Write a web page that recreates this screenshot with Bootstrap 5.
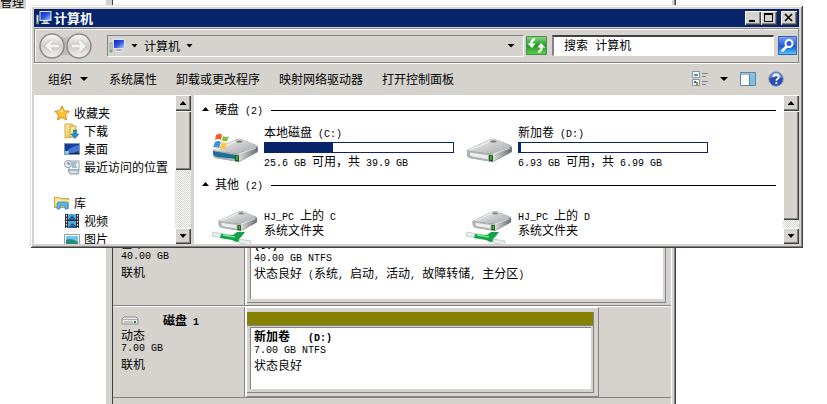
<!DOCTYPE html>
<html lang="zh-CN">
<head>
<meta charset="utf-8">
<meta name="viewport" content="width=device-width, initial-scale=1">
<title>计算机</title>
<link href="https://cdn.jsdelivr.net/npm/bootstrap@5.3.0/dist/css/bootstrap.min.css" rel="stylesheet">
<script src="https://cdn.jsdelivr.net/npm/bootstrap@5.3.0/dist/js/bootstrap.bundle.min.js"></script>
<style>
:root{--face:#d6d3ce;--shade:#848284;--dark:#424142;--navy:#08246b}
body{font:12px/14px "Noto Sans CJK SC",sans-serif;color:#000;background:#fff}
button,input{font:inherit;color:inherit;border-radius:0}
button{padding:0;border:0;background:none}
.la{font-family:"Liberation Mono",monospace;font-size:10px;white-space:pre}
span.la{line-height:10px}
.desktop{min-height:100vh}
.tree-pick{left:0;top:-5px;background:var(--face);padding-right:2px}

/* disk management */
.disk-win{margin:0 151px 0 106px;min-height:100vh;background:var(--face);border-left:1px solid var(--face);border-right:1px solid var(--dark);padding:0 3px 0 5px;box-shadow:inset -1px 0 var(--shade)}
.disk-in{border-left:1px solid var(--dark);border-right:1px solid #fff}
.volumes{height:214px;background:#fff}
.disk-row{height:92px;border-bottom:1px solid var(--shade);border-top:1px solid #fff}
.disk-info{width:132px;padding:6px 8px;border-right:1px solid var(--shade)}
.state{margin-top:1px}
.disk-parts{border-left:1px solid #fff}
.vol{border:1px solid var(--shade);border-top-color:#fff;border-left-color:#fff;padding:4px 4px 3px 0}
.vol-7{width:83%}
.vol-in{border-right:1px solid var(--shade);border-bottom:1px solid var(--shade);padding-bottom:3px}
.vol-bar{height:14px;background:#848200;border-bottom:1px solid var(--shade)}
.vol-body{background:#fff;border:1px solid var(--shade);border-right:0;border-bottom:0;margin:1px 2px 0 3px;padding:1px 3px}
.full .vol{border-right-color:transparent;border-bottom:0;padding-bottom:2px}

/* explorer window */
.explorer{top:5px;left:30px;right:24px;background:var(--face);padding:4px;box-shadow:inset 1px 1px #e7e3de,inset -1px -1px var(--dark),inset 2px 2px #fff,inset -2px -2px var(--shade)}
.title{height:18px;background:var(--navy);color:#fff;padding:0 2px 0 1px}
.title b{font-size:13px;padding-left:2px}
.bevel{background:var(--face);box-shadow:inset 1px 1px #fff,inset -1px -1px var(--dark),inset -2px -2px var(--shade)}
.cap{width:16px;height:14px}
.nav-strip{height:35px;margin-top:1px;border:1px solid var(--shade);box-shadow:0 1px #fff,inset 1px 1px #fff;padding:0 1px 0 3px}
.address{height:22px;margin-left:14px;border:1px solid var(--shade);border-right-color:#fff;border-bottom-color:#fff;padding:0 8px 0 1px}
.address .gap-6{gap:6px}
.refresh{width:21px;height:19px;margin:0 5px 0 2px}
.search{width:222px;height:21px;border:2px solid var(--dark);border-right:1px solid #fff;border-bottom:1px solid #fff;border-left-color:var(--shade);padding:1px 10px 0;background:#fff;font-family:"Liberation Mono","Noto Sans CJK SC",monospace;outline:0}
.search::placeholder{color:#000;opacity:1}
.tools{height:32px;gap:19px;padding:0 15px 0 14px}
.drop{gap:8px;padding-right:2px}
.views{gap:12px}
.arrow{width:7px;height:4px;background:#000;clip-path:polygon(0 0,100% 0,50% 100%)}
.arrow.up{clip-path:polygon(50% 0,100% 100%,0 100%)}
.arrow.wide{width:8px;height:4px}
.panes{height:149px}
.tree{width:141px;background:#fff;padding:9px 0 0 20px;overflow:hidden}
.tree a{display:flex;align-items:center;height:18px;gap:4px;color:#000;text-decoration:none;white-space:nowrap;flex:none}
.tree .kid{padding-left:10px}
.tree .lib{margin-top:18px}
.scroll{width:16px;flex:none;background:repeating-conic-gradient(#fff 0 25%,var(--face) 0 50%) 0 0/2px 2px}
.scroll button{width:16px;height:16px;flex:none}
.thumb-l{height:59px}.thumb-r{height:109px}
.split{width:3px;background:var(--face)}
.files{background:#fff;overflow:hidden;padding:6px 7px 0 8px}
.group{height:16px;gap:6px}
.group hr{margin:2px 0 0 2px;opacity:1;border-top:1px solid #000}
.tiles{display:grid;grid-template-columns:repeat(auto-fill,254px);padding-left:9px}
.tile{display:flex;align-items:center;height:59px;gap:5px}
.tile svg{flex:none}
.tile.net{height:60px}
.net svg{margin-top:10px}
.tile .progress{width:190px;height:11px;margin:2px 0 1px;border:1px solid var(--navy);border-radius:0;background:#fff}
.progress-bar{background:var(--navy)}
svg{display:block}
</style>
</head>
<body>
<svg width="0" height="0" class="position-absolute" aria-hidden="true">
<defs>
<linearGradient id="top" x1="0" y1="0" x2="1" y2="1"><stop offset="0" stop-color="#f6f6f6"/><stop offset="1" stop-color="#a2a4a6"/></linearGradient>
<linearGradient id="side" x1="0" y1="0" x2="1" y2="0"><stop offset="0" stop-color="#dcdcdc"/><stop offset="1" stop-color="#6c6e70"/></linearGradient>
<linearGradient id="scr" x1="0" y1="0" x2="1" y2="1"><stop offset="0" stop-color="#1528b8"/><stop offset=".5" stop-color="#2d55e0"/><stop offset="1" stop-color="#b0ccff"/></linearGradient>
<linearGradient id="ball" x1="0" y1="0" x2="0" y2="1"><stop offset="0" stop-color="#fafafa"/><stop offset=".5" stop-color="#cfcdc9"/><stop offset="1" stop-color="#f2f1ef"/></linearGradient>
<linearGradient id="fold" x1="0" y1="0" x2="1" y2="1"><stop offset="0" stop-color="#fff3b0"/><stop offset="1" stop-color="#dfb945"/></linearGradient>
<linearGradient id="grn" x1="0" y1="0" x2="0" y2="1"><stop offset="0" stop-color="#8bd884"/><stop offset=".5" stop-color="#229a22"/><stop offset="1" stop-color="#5cd04c"/></linearGradient>
<linearGradient id="blu" x1="0" y1="0" x2="0" y2="1"><stop offset="0" stop-color="#7fa6ee"/><stop offset=".55" stop-color="#1d56d2"/><stop offset="1" stop-color="#4fd0ff"/></linearGradient>
<symbol id="pc" viewBox="0 0 16 16"><path d="M1 5h2v9H1z" fill="#d5dde2" stroke="#6f7f7c" stroke-width=".6"/><path d="M1.300 12h1.400v1.500H1.300z" fill="#35a635"/><path d="M4 1h12v10H4z" fill="#dfe3e8"/><path d="M5 2h10v8H5z" fill="url(#scr)"/><path d="M8 11h4l1 2H7z" fill="#aab2bd"/><path d="M6 13h8v1H6z" fill="#e5e9ee"/></symbol>
<symbol id="drive" viewBox="0 0 48 26"><path d="M2 12 26 1q2-.6 4 0l15 6q2 1 2 3v4L28 24 5 20q-3-1-3-4z" fill="#7c7e80"/><path d="M2 12 25 1.500q3-1 6 0L45 7q2 1.200 0 2.500L28 16 3 13z" fill="url(#top)"/><path d="M2 12.500 28 16v8L6 20.500q-4-1-4-4z" fill="#aeb0b2"/><path d="m28 16 18-7v5L28 23.500z" fill="url(#side)"/><path d="m5 14.500 18 2.700v4L7 18.500q-2-.5-2-2z" fill="#eceded"/><path d="m24 17 4 .5v6l-4-.5z" fill="#145c14"/><path d="M25.500 18h1v4h-1z" fill="#7ee85a"/><ellipse cx="28" cy="3.500" rx="3.500" ry="1" fill="#777"/><path d="m5 12 21-9M28 16l17-6" stroke="#fff" stroke-width=".7" fill="none"/></symbol>
<symbol id="plug" viewBox="0 0 48 38"><use href="#drive" x="6" y="2" width="41" height="23"/><path d="m2 24 11 2-1 4-11-2z" fill="#e6eeee" stroke="#a8b5b5" stroke-width=".6"/><path d="m10 26 12 1 4-3h8l-3 4-3 3 4 2-7 1-4-2-12-2z" fill="#12a446"/><path d="m12 27 12 2" stroke="#7fe69b" stroke-width="1.500"/><path d="m28 31 12 2v4l-12-2z" fill="#e6eeee" stroke="#a8b5b5" stroke-width=".6"/></symbol>
</defs>
</svg>

<main class="desktop position-relative overflow-hidden">
<div class="tree-pick position-absolute">管理</div>

<section class="disk-win d-flex flex-column" aria-label="磁盘管理">
<div class="disk-in flex-grow-1">
<div class="volumes"></div>
<div class="disk-row full d-flex">
<div class="disk-info"><b class="d-block ps-5">磁盘<span class="la"> 0</span></b><div>基本</div><div class="la">40.00 GB</div><div class="state">联机</div></div>
<div class="disk-parts flex-grow-1 d-flex"><div class="vol flex-grow-1 d-flex flex-column"><div class="vol-in flex-grow-1 d-flex flex-column"><div class="vol-bar"></div><div class="vol-body flex-grow-1"><b class="d-block"><span class="la">(C:)</span></b><div class="la">40.00 GB NTFS</div><div>状态良好<span class="la"> (</span>系统<span class="la">, </span>启动<span class="la">, </span>活动<span class="la">, </span>故障转储<span class="la">, </span>主分区<span class="la">)</span></div></div></div></div></div>
</div>
<div class="disk-row d-flex">
<div class="disk-info"><div class="d-flex align-items-center"><svg width="18" height="9" viewBox="0 0 18 9"><path d="M3 1h12l2 2v5H1V3z" fill="#ececec" stroke="#8c8c8c"/><path d="M1 3.500h16" stroke="#aaa"/><path d="M3 5h9v2H3z" fill="#c5c5c5"/><path d="M13 5h2v2h-2z" fill="#188a42"/></svg><b class="ps-4">磁盘<span class="la"> 1</span></b></div><div>动态</div><div class="la">7.00 GB</div><div class="state">联机</div></div>
<div class="disk-parts flex-grow-1 d-flex"><div class="vol vol-7 d-flex flex-column"><div class="vol-in flex-grow-1 d-flex flex-column"><div class="vol-bar"></div><div class="vol-body flex-grow-1"><b class="d-block">新加卷<span class="la">   (D:)</span></b><div class="la">7.00 GB NTFS</div><div>状态良好</div></div></div></div></div>
</div>
</div>
</section>

<section class="explorer position-absolute" aria-label="计算机">
<header class="title d-flex align-items-center">
<svg width="17" height="16"><use href="#pc"/></svg><b class="me-auto">计算机</b>
<button class="cap bevel" aria-label="最小化"><svg width="16" height="14"><path d="M4 9h6v2H4z"/></svg></button>
<button class="cap bevel" aria-label="最大化"><svg width="16" height="14"><path d="M3.500 3v7.500h8V3" fill="none" stroke="#000"/><path d="M3 2h9v2H3z"/></svg></button>
<button class="cap bevel ms-1" aria-label="关闭"><svg width="16" height="14"><path d="m4 3 7 7m0-7-7 7" stroke="#000" stroke-width="1.600"/></svg></button>
</header>

<nav class="nav-strip d-flex align-items-center">
<button aria-label="后退和前进"><svg width="55" height="28" viewBox="0 0 55 28"><path d="M14 2Q27 9 41 2v24q-14-6-27 0z" fill="#bdbbb8"/><g fill="url(#ball)" stroke="#8a8a8a" stroke-width="1.500"><circle cx="14" cy="14" r="12"/><circle cx="41" cy="14" r="12"/></g><g stroke="#bdbbb8" stroke-width="4.500" fill="none"><path d="M21 14H9m5-5-5 5 5 5M34 14h12m-5-5 5 5-5 5"/></g><g stroke="#f4f4f3" stroke-width="3" fill="none"><path d="M21 14H9m5-5-5 5 5 5M34 14h12m-5-5 5 5-5 5"/></g></svg></button>
<div class="address d-flex align-items-center flex-grow-1"><div class="d-flex align-items-center gap-6 me-auto"><svg width="16" height="16"><use href="#pc"/></svg><i class="arrow"></i><span>计算机</span><i class="arrow"></i></div><button class="arrow wide" aria-label="历史位置"></button></div>
<button class="refresh" aria-label="刷新"><svg width="21" height="19"><path d="M.5.500h20v18H.5z" fill="url(#grn)" stroke="#4f8c55"/><path d="M9 3Q5 4 5.500 8M12 16q4-1 3.500-5" fill="none" stroke="#fff" stroke-width="2.200"/><path d="M1.500 7.500h8L6 12zM11.500 11.500h8L15 7z" fill="#fff"/></svg></button>
<input class="search" type="search" placeholder="搜索 计算机" aria-label="搜索 计算机">
<button class="ms-1" aria-label="搜索"><svg width="19" height="19"><path d="M.5.500h18v18H.5z" fill="url(#blu)" stroke="#3962b4"/><path d="m8.500 10.500-4 4" stroke="#fff" stroke-width="2.500" stroke-linecap="round"/><circle cx="11" cy="7.500" r="3.500" fill="#2b5fd0" stroke="#fff" stroke-width="2"/></svg></button>
</nav>

<div class="tools d-flex align-items-center">
<button class="drop d-flex align-items-center">组织<i class="arrow wide"></i></button><button>系统属性</button><button>卸载或更改程序</button><button>映射网络驱动器</button><button class="me-auto">打开控制面板</button>
<div class="views d-flex align-items-center">
<button class="views d-flex align-items-center" aria-label="更改视图"><svg width="16" height="16"><g fill="#fff" stroke="#8493a5"><path d="M.5.500h7v6h-7zM.5 8.500h7v6h-7z"/></g><path d="M2 3h4v2H2z" fill="#4898a8"/><path d="M2 10h2v2H2z" fill="#4f58b8"/><path d="M4 11h2v3H4z" fill="#779e20"/><path d="M10 2.500h6m-6 3h4m-4 5h6m-6 3h4" stroke="#71879d"/></svg><i class="arrow wide"></i></button>
<button aria-label="预览窗格"><svg width="16" height="15"><path d="M.5.500h15v13H.5z" fill="#fff" stroke="#5c85a5"/><path d="M1 1h14v2H1z" fill="#a3bfd5"/><path d="M10 3h5v10h-5z" fill="#7fc0df"/><path d="M9.500 2v11" stroke="#5c85a5"/></svg></button>
<button aria-label="帮助"><svg width="16" height="16"><circle cx="8" cy="8" r="7.300" fill="#2c4fae" stroke="#8fa2cf"/><path d="M2 7a6 6 0 0 1 12 0Q8 5 2 7" fill="#6f8fd8"/><path d="M5.500 6q0-2.500 2.600-2.500Q10.800 3.500 10.800 6q0 1.200-1.400 2-1 .7-1 1.700" fill="none" stroke="#fff" stroke-width="1.800"/><circle cx="8.300" cy="12" r="1.100" fill="#fff"/></svg></button>
</div>
</div>

<div class="panes d-flex">
<div class="tree d-flex flex-column">
<a href="#"><svg width="16" height="16"><path d="m8 1 2.200 4.700 5.100.6-3.800 3.500 1 5.100L8 12.400 3.500 14.900l1-5.100L.7 6.300l5.100-.6z" fill="#ffc42e" stroke="#d98a1c"/><path d="m8 3 1 4-5 0 3-1z" fill="#fff09a"/></svg>收藏夹</a>
<a href="#" class="kid"><svg width="16" height="16"><path d="M1 1h7l1 1v12l-8 1z" fill="url(#fold)" stroke="#cda947"/><path d="M6 3h6v11H6z" fill="#f7e391" stroke="#cda947"/><path d="M9.500 7h3v4H15l-4 4.500L7 11h2.500z" fill="#278fd5" stroke="#1763a0" stroke-width=".6"/></svg>下载</a>
<a href="#" class="kid"><svg width="16" height="16"><path d="M.5 2.500h15v11H.5z" fill="#1a3d96" stroke="#8797ae"/><path d="M1 13C3 8 9 5 15 4v6q-7 3-14 3" fill="#3f78d4"/><path d="M5 12h10v1H5z" fill="#15223c"/><path d="M1 10h4v3H1z" fill="#78c6e6"/></svg>桌面</a>
<a href="#" class="kid"><svg width="16" height="16"><path d="M5 2h10v9H5z" fill="#f5f8fa" stroke="#8b9cab"/><path d="M8 4h5M8 6h4M8 8h5" stroke="#4c86a6"/><path d="M4 11h11l-1 4H6z" fill="#d6e0e6" stroke="#8395a3"/><circle cx="4" cy="5" r="3.500" fill="#edf1f3" stroke="#8e9daa"/><path d="M4 3v2h2" stroke="#557" fill="none"/></svg>最近访问的位置</a>
<a href="#" class="lib"><svg width="16" height="16"><path d="M.5 2.500h5l1 1h8v9H.5z" fill="url(#fold)" stroke="#caa13c"/><path d="M2 5h13l-1 7H2z" fill="#f8e496"/><path d="M3 14V9q0-2 2-2h7q2 0 2 2v5h-3v-3H6v3z" fill="#5bb6e6" stroke="#2a83b5" stroke-width=".7"/></svg>库</a>
<a href="#" class="kid"><svg width="16" height="16"><path d="M1 1h14v14H1z" fill="#26303a"/><path d="M4 1h8v6H4zM4 8h8v7H4z" fill="#54a9dd"/><path d="m4 7 4-5 4 5M4 15l4-5 4 3v2z" fill="#28578c"/><path d="M2.500 2v13M13.500 2v13" stroke="#fff" stroke-dasharray="1.500"/></svg>视频</a>
<a href="#" class="kid"><svg width="16" height="16"><path d="M.5 3.500h15v11H.5z" fill="#fff" stroke="#8ca0ac"/><path d="M2 5h12v8H2z" fill="#6fc4e8"/><path d="M2 9q5-3 12 2v2H2z" fill="#298a7f"/></svg>图片</a>
</div>
<div class="scroll d-flex flex-column"><button class="bevel d-flex align-items-center justify-content-center" aria-label="向上"><i class="arrow up"></i></button><div class="thumb-l bevel mb-auto"></div><button class="bevel d-flex align-items-center justify-content-center" aria-label="向下"><i class="arrow"></i></button></div>
<div class="split"></div>
<div class="files flex-grow-1">
<div class="group d-flex align-items-center"><i class="arrow up"></i><span>硬盘<span class="la"> (2)</span></span><hr class="flex-grow-1"></div>
<div class="tiles">
<div class="tile"><svg width="48" height="38" viewBox="0 -10 48 38"><use href="#drive" width="48" height="26"/><path d="m2 13 22 4v4L7 19q-5-1-5-4z" fill="#1d7196"/><path d="M5-3q4-3 6 0L10 2Q7 0 4 2z" fill="#e8632b"/><path d="M12-2q3 2 6 0l-2 5q-3 1-5-1z" fill="#86bd3c"/><path d="M4 4q3-2 6 0L8 10Q5 8 2 10z" fill="#3f8fdb"/><path d="M11 4q2 2 5 0l-2 7q-2 1-5-1z" fill="#ffc83a"/></svg><div><div>本地磁盘<span class="la"> (C:)</span></div><div class="progress"><div class="progress-bar" style="width:36%"></div></div><div><span class="la">25.6 GB </span>可用，共<span class="la"> 39.9 GB</span></div></div></div>
<div class="tile"><svg width="48" height="38" viewBox="0 -10 48 38"><use href="#drive" width="48" height="26"/></svg><div><div>新加卷<span class="la"> (D:)</span></div><div class="progress"><div class="progress-bar" style="width:1%"></div></div><div><span class="la">6.93 GB </span>可用，共<span class="la"> 6.99 GB</span></div></div></div>
</div>
<div class="group d-flex align-items-center"><i class="arrow up"></i><span>其他<span class="la"> (2)</span></span><hr class="flex-grow-1"></div>
<div class="tiles">
<div class="tile net"><svg width="48" height="38"><use href="#plug"/></svg><div><div><span class="la">HJ_PC </span>上的<span class="la"> C</span></div><div>系统文件夹</div></div></div>
<div class="tile net"><svg width="48" height="38"><use href="#plug"/></svg><div><div><span class="la">HJ_PC </span>上的<span class="la"> D</span></div><div>系统文件夹</div></div></div>
</div>
</div>
<div class="scroll d-flex flex-column"><button class="bevel d-flex align-items-center justify-content-center" aria-label="向上"><i class="arrow up"></i></button><div class="thumb-r bevel mb-auto"></div><button class="bevel d-flex align-items-center justify-content-center" aria-label="向下"><i class="arrow"></i></button></div>
</div>
</section>
</main>
</body>
</html>
